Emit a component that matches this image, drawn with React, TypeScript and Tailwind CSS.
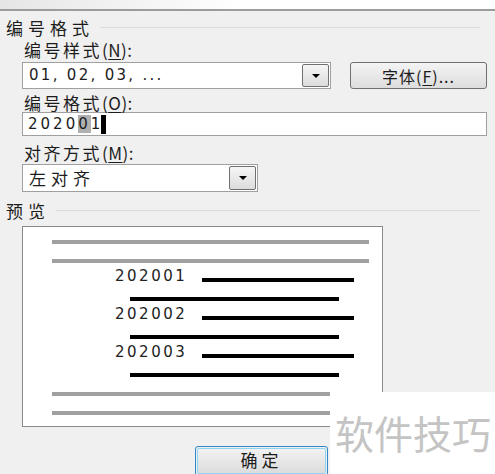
import React from "react";

const cjk = "font-['Noto_Sans_CJK_SC','Noto_Sans',sans-serif]";
const latin = "font-['DejaVu_Sans','Noto_Sans_CJK_SC',sans-serif]";

const DropButton = ({ className = "" }: { className?: string }) => (
  <div
    className={`flex w-[27px] items-center justify-center rounded-[2px] border border-[#707070] bg-gradient-to-b from-[#f6f6f6] to-[#dcdcdc] ${className}`}
  >
    <div className="h-0 w-0 border-x-[4px] border-t-[4px] border-x-transparent border-t-black" />
  </div>
);

const Label = ({ text, hot }: { text: string; hot: string }) => (
  <div className={`ml-[24px] flex h-[16px] items-center text-[17px] leading-none ${cjk}`}>
    <span className="tracking-[2.5px]">{text}</span>
    <span className="tracking-[0.5px]">
      (<span className="underline underline-offset-2">{hot}</span>):
    </span>
  </div>
);

const GroupHeader = ({ text, className = "" }: { text: string; className?: string }) => (
  <div className={`flex h-[16px] items-center gap-[6px] pr-[15px] ${className}`}>
    <span className={`pl-[6px] text-[17px] leading-none tracking-[5px] ${cjk}`}>{text}</span>
    <div className="h-px flex-1 bg-[#dadada]" />
  </div>
);

const GrayLine = () => (
  <div className="flex h-[19px] items-center">
    <div className="ml-[29px] h-[4px] w-[317px] bg-[#a0a0a0]" />
  </div>
);

const NumberRow = ({ n }: { n: string }) => (
  <>
    <div className="flex h-[19px] items-center">
      <span className={`ml-[92px] mb-[6px] w-[87px] text-[15px] leading-none tracking-[2.5px] text-[#222] ${latin}`}>{n}</span>
      <div className="h-[4px] w-[152px] bg-black" />
    </div>
    <div className="flex h-[19px] items-center">
      <div className="ml-[107px] h-[4px] w-[209px] bg-black" />
    </div>
  </>
);

export default function App() {
  return (
    <div className="relative h-[474px] w-[495px] overflow-hidden bg-[#f0f0f0] text-[#1c1c1c]">
      <div className="h-[9px] bg-gradient-to-r from-[#e6e6e6] via-white to-white" />
      <div className="h-[2px] bg-[#9c9c9c]" />

      <GroupHeader text="编号格式" className="mt-[8px]" />
      <div className="mt-[6px]">
        <Label text="编号样式" hot="N" />
      </div>
      <div className="mt-[5px] flex h-[27px] pr-[8px]">
        <div className="ml-[22px] flex w-[309px] border border-[#a0a0a0] bg-white p-[1px]">
          <div className={`flex flex-1 items-center pl-[5px] text-[15px] tracking-[2.3px] ${latin}`}>01, 02, 03, ...</div>
          <DropButton />
        </div>
        <div
          className={`ml-auto flex w-[137px] items-center justify-center rounded-[3px] border border-[#707070] bg-gradient-to-b from-[#f4f4f4] to-[#dddddd] text-[16px] tracking-[1px] ${cjk}`}
        >
          字体(<span className="underline underline-offset-2">F</span>)...
        </div>
      </div>

      <div className="mt-[5px]">
        <Label text="编号格式" hot="O" />
      </div>
      <div className="mt-[2px] ml-[22px] flex h-[24px] w-[465px] items-center border border-[#a0a0a0] bg-white pl-[5px]">
        <span className={`text-[15px] tracking-[3px] ${latin}`}>
          2020<span className="bg-[#b0b0b0]">0</span>1
        </span>
        <div className="-ml-[2px] h-[19px] w-[5px] bg-black" />
      </div>

      <div className="mt-[8px]">
        <Label text="对齐方式" hot="M" />
      </div>
      <div className="mt-[4px] ml-[22px] flex h-[28px] w-[236px] border border-[#a0a0a0] bg-white p-[1px]">
        <div className={`flex flex-1 items-center pl-[5px] text-[17px] tracking-[5px] ${cjk}`}>左对齐</div>
        <DropButton />
      </div>

      <GroupHeader text="预览" className="mt-[10px]" />
      <div className="mt-[8px] ml-[22px] h-[201px] w-[361px] border border-[#8a8a8a] bg-white pt-[5px]">
        <GrayLine />
        <GrayLine />
        <NumberRow n="202001" />
        <NumberRow n="202002" />
        <NumberRow n="202003" />
        <GrayLine />
        <GrayLine />
      </div>

      <div className="mt-[19px] ml-[195px] h-[30px] w-[133px] rounded-[3px] border border-[#2f86c8] p-[1px]">
        <div
          className={`flex h-full items-center justify-center rounded-[2px] border border-[#8fd3f5] bg-gradient-to-b from-[#f2f2f2] to-[#dcdcdc] pb-[3px] text-[17px] tracking-[4px] ${cjk}`}
        >
          确定
        </div>
      </div>

      <div className="absolute bottom-0 left-[330px] right-0 top-[392px] bg-white">
        <div className={`pl-[5px] pt-[21px] text-[39px] leading-none text-[#c4c4c4] ${cjk}`}>软件技巧</div>
      </div>
    </div>
  );
}
